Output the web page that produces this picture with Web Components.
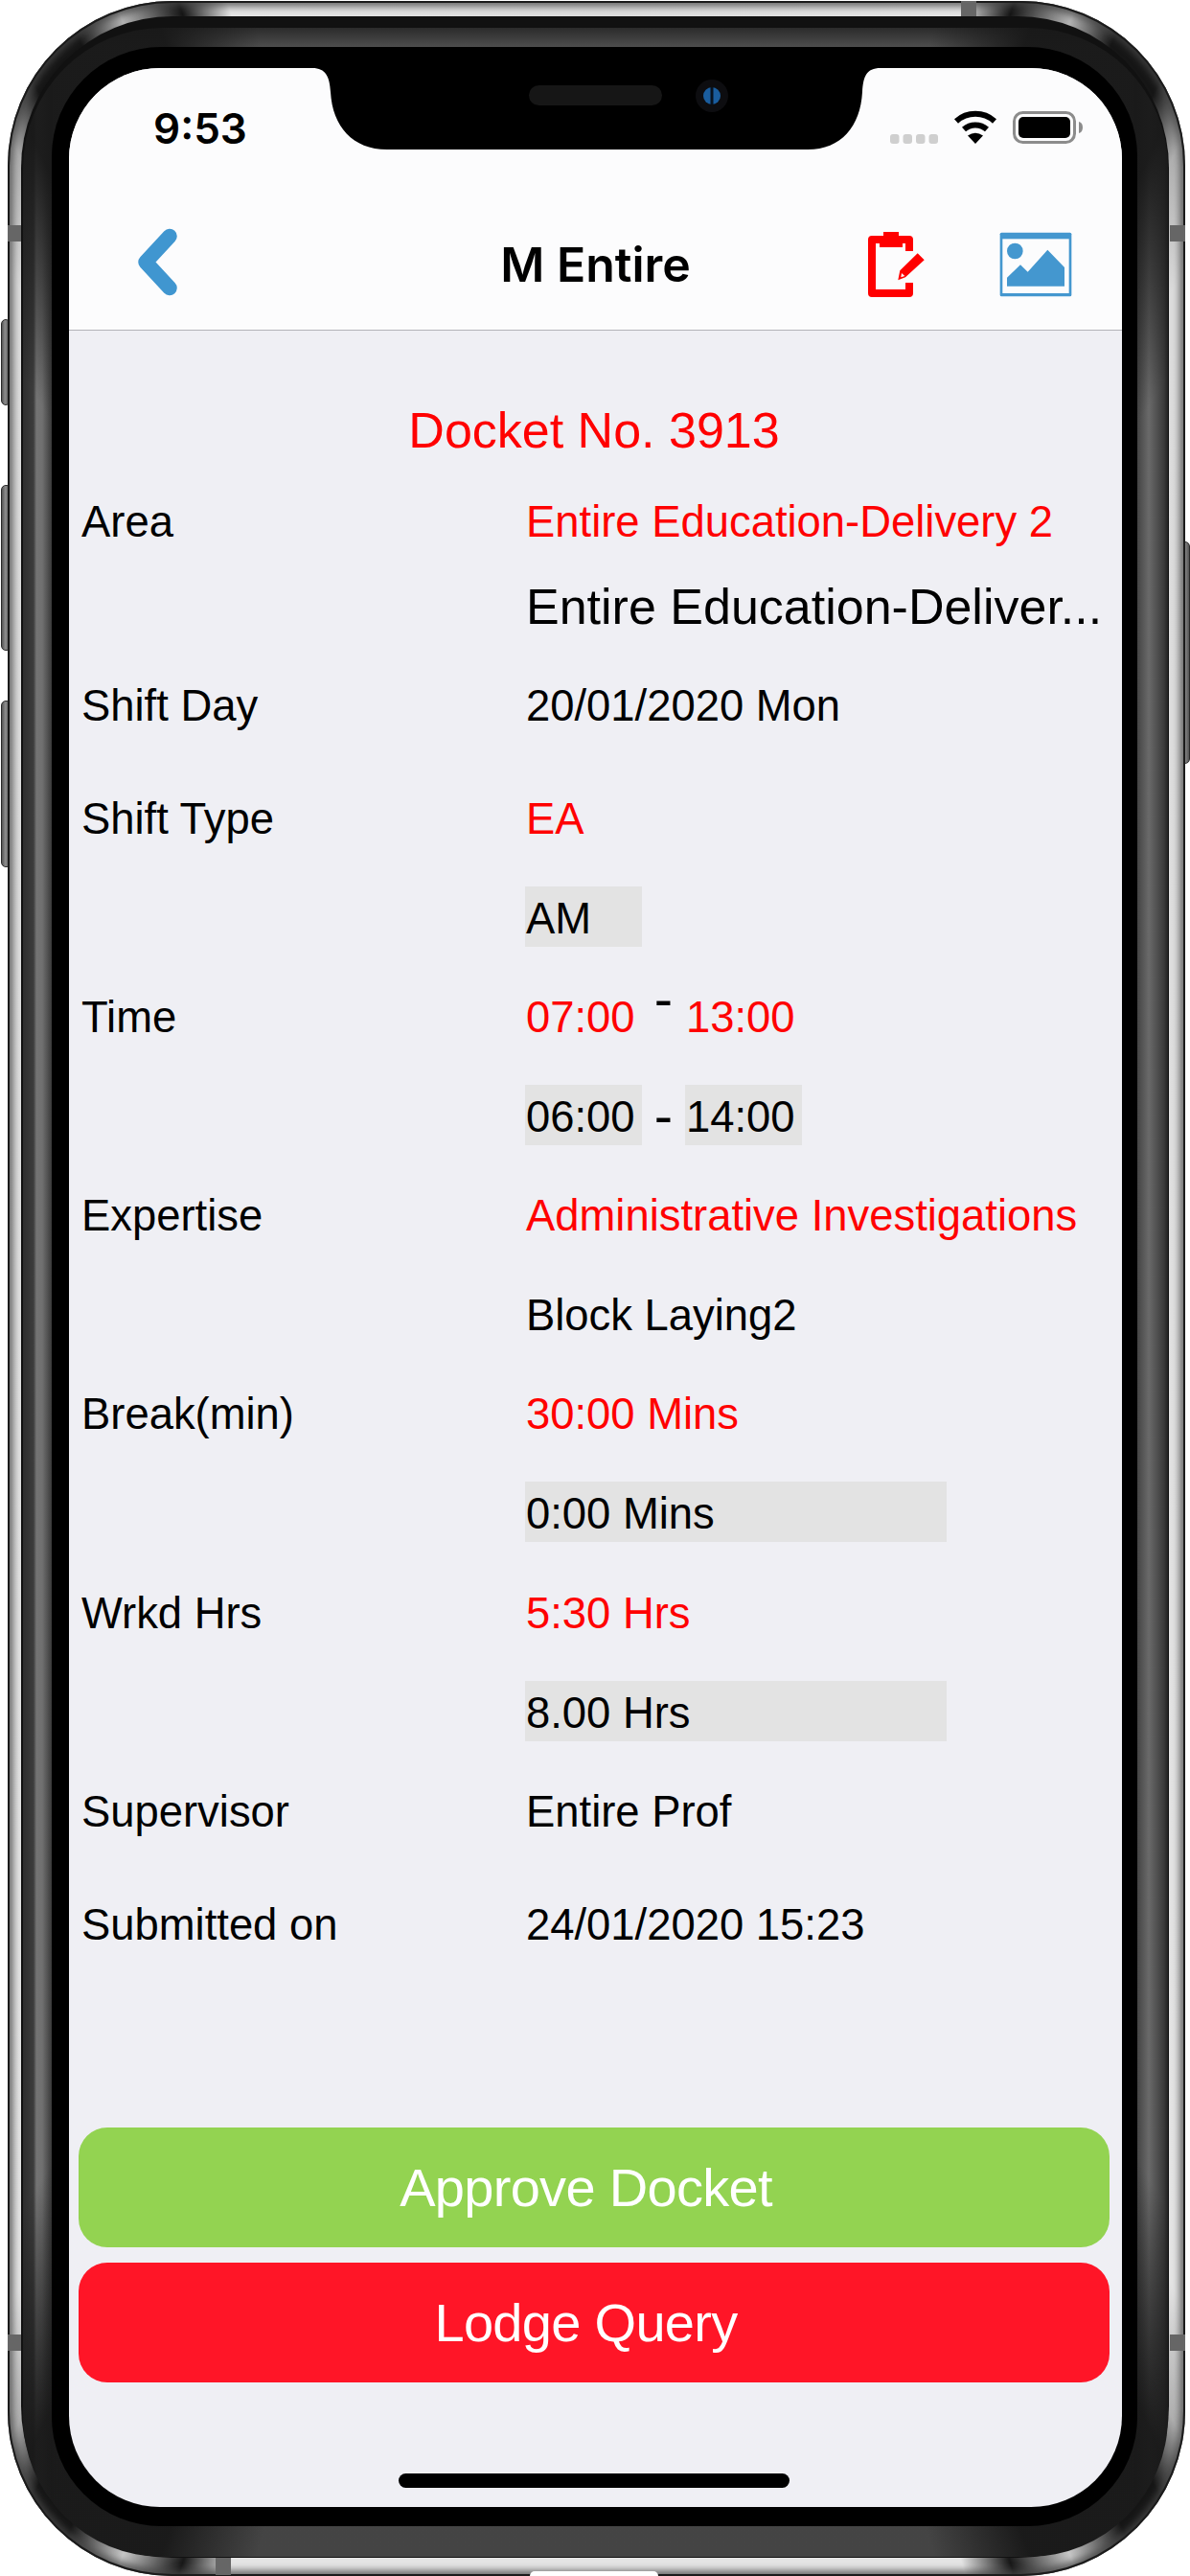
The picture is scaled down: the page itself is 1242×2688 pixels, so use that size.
<!DOCTYPE html>
<html>
<head>
<meta charset="utf-8">
<title>Docket</title>
<style>
html, body { margin: 0; padding: 0; background: #fff; }
body { width: 1242px; height: 2688px; overflow: hidden; font-family: "Liberation Sans", Arial, sans-serif; }
</style>
</head>
<body>
<phone-frame>
  <status-bar></status-bar>
  <nav-bar title="M Entire"></nav-bar>
  <docket-sheet>
    <docket-heading>Docket No. 3913</docket-heading>
    <docket-row label="Area" style="--h:66px"><row-value tone="red">Entire Education-Delivery 2</row-value></docket-row>
    <docket-row style="--h:112px"><row-value big>Entire Education-Deliver...</row-value></docket-row>
    <docket-row label="Shift Day" style="--h:94px"><row-value>20/01/2020 Mon</row-value></docket-row>
    <docket-row label="Shift Type" style="margin-top:19px"><row-value tone="red">EA</row-value></docket-row>
    <docket-row><row-value chip style="--w:122px">AM</row-value></docket-row>
    <docket-row label="Time">
      <row-value tone="red" style="--w:122px">07:00</row-value>
      <row-dash raised></row-dash>
      <row-value tone="red" style="--w:122px">13:00</row-value>
    </docket-row>
    <docket-row>
      <row-value chip style="--w:122px">06:00</row-value>
      <row-dash></row-dash>
      <row-value chip style="--w:122px">14:00</row-value>
    </docket-row>
    <docket-row label="Expertise"><row-value tone="red">Administrative Investigations</row-value></docket-row>
    <docket-row><row-value>Block Laying2</row-value></docket-row>
    <docket-row label="Break(min)"><row-value tone="red">30:00 Mins</row-value></docket-row>
    <docket-row><row-value chip style="--w:440px">0:00 Mins</row-value></docket-row>
    <docket-row label="Wrkd Hrs"><row-value tone="red">5:30 Hrs</row-value></docket-row>
    <docket-row><row-value chip style="--w:440px">8.00 Hrs</row-value></docket-row>
    <docket-row label="Supervisor"><row-value>Entire Prof</row-value></docket-row>
    <docket-row label="Submitted on" style="margin-top:15px"><row-value>24/01/2020 15:23</row-value></docket-row>
    <action-button slot="actions" color="#93d351">Approve Docket</action-button>
    <action-button slot="actions" color="#ff1527">Lodge Query</action-button>
  </docket-sheet>
</phone-frame>

<script>
// phone hardware: bezel rings sit behind the screen, notch sits over it
const frameTemplate = document.createElement('template');
frameTemplate.innerHTML = `
<style>
:host {
  display: block;
  position: relative;
  width: 1242px;
  height: 2688px;
  box-sizing: border-box;
  padding: 71px 71px 72px 72px;
}
.ring { position: absolute; box-sizing: border-box; }
.side { position: absolute; background: linear-gradient(90deg, #555, #8c8c8c 40%, #555); border-radius: 5px; border: 1px solid #2a2a2a; box-sizing: border-box; }
.silver {
  left: 8px; top: 1px; right: 5px; bottom: 0;
  border-radius: 172px;
  background: conic-gradient(from 0deg,
    #dcdcdc 0deg, #e4e4e4 16deg, #161616 18deg, #b4b4b4 20.5deg, #161616 22.5deg, #161616 25deg, #b0b0b0 27deg, #dcdcdc 30deg,
    #e4e4e4 150deg, #b0b0b0 153deg, #161616 155deg, #161616 157deg, #c8c8c8 159.5deg, #181818 162deg, #e4e4e4 164deg,
    #e4e4e4 196deg, #181818 198deg, #c8c8c8 200.5deg, #161616 203deg, #161616 205deg, #b0b0b0 207deg, #e4e4e4 210deg,
    #dcdcdc 330deg, #b0b0b0 333deg, #161616 335deg, #161616 337.5deg, #b4b4b4 339.5deg, #161616 342deg, #e4e4e4 344deg, #dcdcdc 360deg);
  box-shadow: inset 0 0 0 2px #1b1b1b, inset 0 0 7px 6px rgba(70,70,70,.75);
}
.edge { left: 22px; top: 17px; right: 22px; bottom: 19px; border-radius: 158px; background: #111; }
.grey {
  left: 24px; top: 29px; right: 23px; bottom: 20px;
  border-radius: 146px;
  background:
    conic-gradient(from 0deg,
      transparent 0deg, transparent 15deg, rgba(24,24,24,.95) 19deg, rgba(24,24,24,.95) 26deg, transparent 32deg,
      transparent 148deg, rgba(24,24,24,.95) 154deg, rgba(24,24,24,.95) 161deg, transparent 165deg,
      transparent 195deg, rgba(24,24,24,.95) 199deg, rgba(24,24,24,.95) 206deg, transparent 212deg,
      transparent 328deg, rgba(24,24,24,.95) 334deg, rgba(24,24,24,.95) 341deg, transparent 345deg, transparent 360deg),
    linear-gradient(90deg, #2e2e2e 0, #3c3c3c 11px, #747474 14px, #707070 20px, #3a3a3a 30px, transparent 31px, transparent calc(100% - 36px), #3a3a3a calc(100% - 35px), #6a6a6a calc(100% - 20px), #3a3a3a calc(100% - 4px), #222 100%),
    linear-gradient(180deg, #2b2b2b 0, #4d4d4d 20px, #444 100%);
}
.black { left: 54px; top: 49px; right: 55px; bottom: 52px; border-radius: 114px; background: #000; }
.screen {
  position: relative;
  height: 100%;
  border-radius: 95px;
  overflow: hidden;
  display: flex;
  flex-direction: column;
  background: #efeff4;
}
.band { position: absolute; background: #666; }
.notch { position: absolute; left: 72px; top: 71px; }
</style>
<div class="side" style="left:1px;top:333px;width:10px;height:90px"></div>
<div class="side" style="left:1px;top:506px;width:11px;height:173px"></div>
<div class="side" style="left:1px;top:731px;width:11px;height:174px"></div>
<div class="side" style="right:0;top:565px;width:10px;height:232px"></div>
<div class="ring silver"></div>
<div class="band" style="left:1003px;top:1px;width:16px;height:16px"></div>
<div class="band" style="left:8px;top:235px;width:15px;height:17px"></div>
<div class="band" style="left:1221px;top:235px;width:16px;height:17px"></div>
<div class="band" style="left:8px;top:2436px;width:15px;height:17px"></div>
<div class="band" style="left:1221px;top:2436px;width:16px;height:17px"></div>
<div class="band" style="left:225px;top:2669px;width:16px;height:18px"></div>
<div class="band" style="left:553px;top:2683px;width:134px;height:5px;border-radius:8px 8px 0 0;background:#fff"></div>
<div class="ring edge"></div>
<div class="ring grey"></div>
<div class="ring black"></div>
<div class="screen"><slot></slot></div>
<svg class="notch" width="1099" height="90" viewBox="72 71 1099 90">
  <path fill="#000" d="M326 71 C340 71 344 80 345 96 C347 132 368 156 404 156 H843 C878 156 898 132 900 96 C901 80 904 71 919 71 Z"/>
  <rect x="552" y="89" width="139" height="21" rx="10.5" fill="#161616"/>
  <circle cx="743" cy="100" r="17" fill="#0d0d10"/>
  <circle cx="743" cy="100" r="9" fill="#1a5d9e"/>
  <rect x="741.5" y="91" width="3" height="18" fill="#07121f"/>
</svg>
`;

class PhoneFrame extends HTMLElement {
  constructor() {
    super();
    this.attachShadow({ mode: 'open' }).appendChild(frameTemplate.content.cloneNode(true));
  }
}

const statusTemplate = document.createElement('template');
statusTemplate.innerHTML = `
<style>
:host {
  display: flex;
  align-items: center;
  height: 97px;
  box-sizing: border-box;
  padding: 0 40px 0 88px;
  background: #fcfcfd;
}
.time { font: 600 44px Inter, "Liberation Sans", sans-serif; color: #000; margin-top: 28px; line-height: 50px; }
.icons { margin-left: auto; margin-top: 27px; display: flex; }
</style>
<span class="time">9:53</span>
<div class="icons">
  <svg width="202" height="36" viewBox="929 115 202 36">
    <g fill="#cfcfcf">
      <rect x="929" y="140" width="9.5" height="10" rx="3"/>
      <rect x="942.5" y="140" width="9.5" height="10" rx="3"/>
      <rect x="956" y="140" width="9.5" height="10" rx="3"/>
      <rect x="969.5" y="140" width="9.5" height="10" rx="3"/>
    </g>
    <g fill="none" stroke="#000" stroke-width="6">
      <path d="M998 126.500 A30 30 0 0 1 1038 126.500"/>
      <path d="M1006 135 A18 18 0 0 1 1030 135"/>
    </g>
    <path d="M1018 150 L1010 141.500 Q1018 136 1026 141.500 Z" fill="#000"/>
    <rect x="1058.500" y="117.500" width="63" height="31" rx="9" fill="none" stroke="#8c8c8c" stroke-width="3"/>
    <rect x="1063" y="122" width="54" height="22" rx="5" fill="#000"/>
    <path d="M1126 127 Q1130 128 1130 133 Q1130 138 1126 139 Z" fill="#8c8c8c"/>
  </svg>
</div>
`;

class StatusBar extends HTMLElement {
  constructor() {
    super();
    this.attachShadow({ mode: 'open' }).appendChild(statusTemplate.content.cloneNode(true));
  }
}

const navTemplate = document.createElement('template');
navTemplate.innerHTML = `
<style>
:host {
  display: grid;
  grid-template-columns: 1fr auto 1fr;
  align-items: center;
  height: 177px;
  box-sizing: border-box;
  padding: 38px 0 2px;
  background: #fcfcfd;
  border-bottom: 1px solid #b3b3b8;
}
.title { font: 600 50px Inter, "Liberation Sans", sans-serif; color: #000; text-align: center; margin-top: 3px; }
.left { padding-left: 70px; display: flex; }
.right { display: flex; justify-content: flex-end; gap: 76px; padding: 3px 52px 0 0; align-items: center; }
svg { display: block; }
</style>
<div class="left">
  <svg width="46" height="72" viewBox="0 0 46 72">
    <path d="M35 8.500 L10 35.500 L35 62.500" fill="none" stroke="#4096d0" stroke-width="15.500" stroke-linecap="round" stroke-linejoin="round"/>
  </svg>
</div>
<div class="title"></div>
<div class="right">
  <svg width="66" height="76" viewBox="0 0 66 76">
    <path fill="#ff0000" d="M9 8 H48 a4 4 0 0 1 4 4 V24 H44 V16 H13 V64 H44 V57 H52 V68 a4 4 0 0 1 -4 4 H9 a4 4 0 0 1 -4 -4 V12 a4 4 0 0 1 4 -4 Z"/>
    <path fill="#ff0000" d="M21 4 H37 V8 H41 V20 H17 V8 H21 Z"/>
    <path fill="#ff0000" fill-rule="evenodd" d="M56.700 26.300 L63.700 33.300 L44 51.300 L36.300 54.300 L38.300 44.300 Z M40 47 L39.300 51.300 L43.300 50 Z"/>
  </svg>
  <svg width="76" height="68" viewBox="546 97 228 204">
    <rect x="548" y="99" width="224" height="200" rx="5" fill="#4497cf"/>
    <rect x="556" y="119" width="208" height="170" fill="#fcfcfd"/>
    <circle cx="595" cy="157" r="25" fill="#4497cf"/>
    <path fill="#4497cf" d="M570 267 V240 L612 200 L635 222 L697 153 L750 208 V267 Z"/>
  </svg>
</div>
`;

class NavBar extends HTMLElement {
  constructor() {
    super();
    this.attachShadow({ mode: 'open' }).appendChild(navTemplate.content.cloneNode(true));
  }

  connectedCallback() {
    this.shadowRoot.querySelector('.title').textContent = this.getAttribute('title');
    this.removeAttribute('title');
  }
}

const sheetTemplate = document.createElement('template');
sheetTemplate.innerHTML = `
<style>
:host {
  display: flex;
  flex-direction: column;
  flex: 1;
  min-height: 0;
}
.rows { flex: 1; padding-top: 65px; }
.actions { display: flex; flex-direction: column; gap: 16px; padding: 0 13px 0 10px; }
.home { flex: none; width: 408px; height: 15px; border-radius: 8px; background: #000; margin: 95px 0 20px 344px; }
</style>
<div class="rows"><slot></slot></div>
<div class="actions"><slot name="actions"></slot></div>
<div class="home"></div>
`;

class DocketSheet extends HTMLElement {
  constructor() {
    super();
    this.attachShadow({ mode: 'open' }).appendChild(sheetTemplate.content.cloneNode(true));
  }
}

class DocketHeading extends HTMLElement {
  constructor() {
    super();
    this.attachShadow({ mode: 'open' }).innerHTML = `
      <style>
      :host { display: block; height: 100px; box-sizing: border-box; padding: 2px 3px 0 0; color: #ff0000; font-size: 52px; line-height: 74px; text-align: center; }
      </style>
      <slot></slot>`;
  }
}

const rowTemplate = document.createElement('template');
rowTemplate.innerHTML = `
<style>
:host {
  display: grid;
  grid-template-columns: 476px 1fr;
  align-items: center;
  height: var(--h, 103.6px);
  font-size: 45.4px;
  color: #000;
}
.label { padding: 3px 0 0 13px; line-height: 63px; white-space: nowrap; }
.value { display: flex; align-items: center; min-width: 0; }
</style>
<div class="label"></div>
<div class="value"><slot></slot></div>
`;

class DocketRow extends HTMLElement {
  constructor() {
    super();
    this.attachShadow({ mode: 'open' }).appendChild(rowTemplate.content.cloneNode(true));
  }

  connectedCallback() {
    this.shadowRoot.querySelector('.label').textContent = this.getAttribute('label') || '';
  }
}

class RowValue extends HTMLElement {
  constructor() {
    super();
    this.attachShadow({ mode: 'open' }).innerHTML = `
      <style>
      :host { display: block; width: var(--w, auto); white-space: nowrap; box-sizing: border-box; padding: 3px 0 0 1px; line-height: 63px; }
      :host([tone="red"]) { color: #ff0000; }
      :host([chip]) { background: #e3e3e3; height: 63px; padding-top: 2px; }
      :host([big]) { font-size: 52px; }
      </style>
      <slot></slot>`;
  }
}

class RowDash extends HTMLElement {
  constructor() {
    super();
    this.attachShadow({ mode: 'open' }).innerHTML = `
      <style>
      :host { display: block; width: 45px; text-align: center; line-height: 50px; font-size: 58px; }
      :host([raised]) { margin-bottom: 35px; }
      </style>-`;
  }
}

class ActionButton extends HTMLElement {
  constructor() {
    super();
    this.attachShadow({ mode: 'open' }).innerHTML = `
      <style>
      :host { display: flex; align-items: center; justify-content: center; height: 125px; box-sizing: border-box; padding-right: 17px; border-radius: 30px; color: #fff; font-size: 56px; letter-spacing: -0.7px; background: var(--btn); }
      </style>
      <slot></slot>`;
  }

  connectedCallback() {
    this.style.setProperty('--btn', this.getAttribute('color'));
  }
}

customElements.define('phone-frame', PhoneFrame);
customElements.define('status-bar', StatusBar);
customElements.define('nav-bar', NavBar);
customElements.define('docket-sheet', DocketSheet);
customElements.define('docket-heading', DocketHeading);
customElements.define('docket-row', DocketRow);
customElements.define('row-value', RowValue);
customElements.define('row-dash', RowDash);
customElements.define('action-button', ActionButton);
</script>
</body>
</html>
